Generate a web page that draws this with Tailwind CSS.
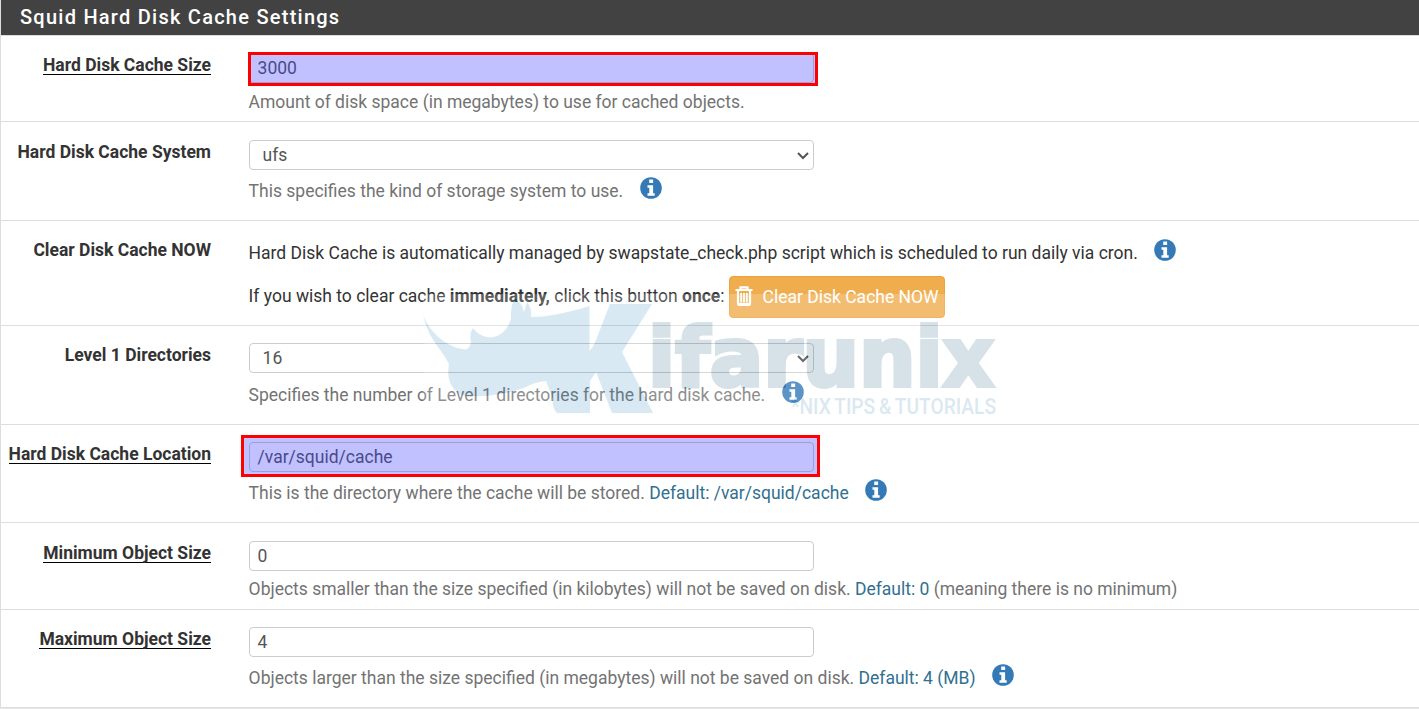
<!DOCTYPE html>
<html lang="en">
  <head>
    <meta charset="UTF-8" />
    <meta name="viewport" content="width=device-width, initial-scale=1.0" />
    <title>Squid Cache</title>
    <script src="https://cdn.jsdelivr.net/npm/@tailwindcss/browser@4"></script>
  </head>
  <body
    class="relative w-[1419px] h-[709px] overflow-hidden bg-[#e8e8e8] font-['Roboto',sans-serif] text-[17.5px] leading-[25px] text-[#333]"
  >
    <svg class="hidden">
      <symbol id="info" viewBox="0 0 22 22">
        <circle cx="11" cy="11" r="10.8" fill="#337ab7" />
        <path
          fill="#fff"
          d="M9.2 2.6h3.9v3.3H9.2zM7.5 8.2h5.6v8h1.6v2.6H7.5v-2.6h1.8v-5.4H7.5z"
        />
      </symbol>
    </svg>

    <div class="h-[708px] border-l border-b border-[#ddd] bg-white">
      <h2
        class="h-[35px] bg-[#424242] pl-[19px] text-[20px] leading-[34px] font-medium tracking-[1.25px] text-white"
      >
        Squid Hard Disk Cache Settings
      </h2>

      <div class="flex h-[87px] border-y border-[#ddd]">
        <label class="w-[210px] pt-[17px] text-right font-bold">
          <span class="inline-block h-[22px] border-b border-black">Hard Disk Cache Size</span>
        </label>
        <div class="ml-[37.6px] pt-[17px]">
          <div class="h-[30px] w-[565px] rounded border border-[#ccc] px-2 leading-[28px] text-[#555]">3000</div>
          <p class="mt-[7px] text-[#737373]">Amount of disk space (in megabytes) to use for cached objects.</p>
        </div>
      </div>

      <div class="flex h-[99px] border-b border-[#ddd]">
        <label class="w-[210px] pt-[18px] text-right font-bold">Hard Disk Cache System</label>
        <div class="ml-[37.6px] pt-[18px]">
          <div class="flex h-[30px] w-[565px] items-center justify-between rounded border border-[#ccc] pr-1 pl-[13px] text-[#555]">
            ufs
            <svg class="mt-[1px] h-3 w-3" viewBox="0 0 12 12" fill="none" stroke="#555" stroke-width="2"><path d="M1 3l5 5 5-5" /></svg>
          </div>
          <p class="mt-[9px] flex text-[#737373]">
            This specifies the kind of storage system to use.
            <svg class="-mt-[2px] ml-[16.5px] h-[22px] w-[22px]"><use href="#info" /></svg>
          </p>
        </div>
      </div>

      <div class="flex h-[105px] border-b border-[#ddd]">
        <label class="w-[210px] pt-[17px] text-right font-bold">Clear Disk Cache NOW</label>
        <div class="ml-[37.6px] pt-[20px]">
          <p class="flex">
            Hard Disk Cache is automatically managed by swapstate_check.php script which is scheduled to run daily via cron.
            <svg class="-mt-[2px] ml-[16.5px] h-[22px] w-[22px]"><use href="#info" /></svg>
          </p>
          <div class="mt-[10px] flex items-center">
            <p class="-mt-[2px]">If you wish to clear cache <b>immediately,</b> click this button <b>once</b>:</p>
            <button
              class="ml-[4.5px] flex h-[42px] w-[216px] items-center rounded border border-[#eea236] bg-[#f0ad4e] pl-[5px] text-white"
            >
              <svg class="-mt-[2px] mr-[9.5px] h-5 w-[18px]" viewBox="0 0 18 20" fill="none" stroke="#fff">
                <path stroke-width="2.2" d="M0.500 4h17M5.500 4V1.300h7V4M3 4v13.500q0 1.500 1.500 1.500h9q1.500 0 1.500-1.500V4" />
                <path stroke-width="1.800" d="M6.200 7v9.500M9 7v9.500M11.800 7v9.500M4 18h10" />
              </svg>
              Clear Disk Cache NOW
            </button>
          </div>
        </div>
      </div>

      <div class="flex h-[99px] border-b border-[#ddd]">
        <label class="w-[210px] pt-[17px] text-right font-bold">Level 1 Directories</label>
        <div class="ml-[37.6px] pt-[17px]">
          <div class="flex h-[30px] w-[565px] items-center justify-between rounded border border-[#ccc] pr-1 pl-[13px] text-[#555]">
            16
            <svg class="mt-[1px] h-3 w-3" viewBox="0 0 12 12" fill="none" stroke="#444" stroke-width="2"><path d="M1 3l5 5 5-5" /></svg>
          </div>
          <p class="mt-[10px] flex text-[#737373]">
            Specifies the number of Level 1 directories for the hard disk cache.
            <svg class="-mt-[2px] ml-[16.5px] h-[22px] w-[22px]"><use href="#info" /></svg>
          </p>
        </div>
      </div>

      <div class="flex h-[98px] border-b border-[#ddd]">
        <label class="w-[210px] pt-[17px] text-right font-bold">
          <span class="inline-block h-[22px] border-b border-black">Hard Disk Cache Location</span>
        </label>
        <div class="ml-[37.6px] pt-[17px]">
          <div class="h-[30px] w-[565px] rounded border border-[#ccc] px-2 leading-[28px] text-[#555]">/var/squid/cache</div>
          <p class="mt-[9px] flex text-[#737373]">
            <span>This is the directory where the cache will be stored. <span class="text-[#31708f]">Default: /var/squid/cache</span></span>
            <svg class="-mt-[2px] ml-[16.5px] h-[22px] w-[22px]"><use href="#info" /></svg>
          </p>
        </div>
      </div>

      <div class="flex h-[87px] border-b border-[#ddd]">
        <label class="w-[210px] pt-[18px] text-right font-bold">
          <span class="inline-block h-[22px] border-b border-black">Minimum Object Size</span>
        </label>
        <div class="ml-[37.6px] pt-[18px]">
          <div class="h-[30px] w-[565px] rounded border border-[#ccc] px-2 leading-[28px] text-[#555]">0</div>
          <p class="mt-[6px] text-[#737373]">
            Objects smaller than the size specified (in kilobytes) will not be saved on disk.
            <span class="text-[#31708f]">Default: 0</span> (meaning there is no minimum)
          </p>
        </div>
      </div>

      <div class="flex">
        <label class="w-[210px] pt-[17px] text-right font-bold">
          <span class="inline-block h-[22px] border-b border-black">Maximum Object Size</span>
        </label>
        <div class="ml-[37.6px] pt-[17px]">
          <div class="h-[30px] w-[565px] rounded border border-[#ccc] px-2 leading-[28px] text-[#555]">4</div>
          <p class="mt-[9px] flex text-[#737373]">
            <span>Objects larger than the size specified (in megabytes) will not be saved on disk. <span class="text-[#31708f]">Default: 4 (MB)</span></span>
            <svg class="-mt-[2px] ml-[16.5px] h-[22px] w-[22px]"><use href="#info" /></svg>
          </p>
        </div>
      </div>
    </div>

    <!-- highlights -->
    <div class="absolute top-[52px] left-[248px] h-[34px] w-[570px] border-3 border-[#f00] bg-[#3333ff]/30"></div>
    <div class="absolute top-[435px] left-[241px] h-[42px] w-[579px] border-3 border-[#f00] bg-[#3333ff]/30"></div>

    <!-- watermark -->
    <svg class="absolute top-[294px] left-[420px] h-[126px] w-[580px] overflow-visible opacity-20" viewBox="420 294 580 126">
      <path fill="#fff" d="M423 294h577v125H423z" />
      <path
        fill="#4396c8"
        d="M423 315C429 331 446 348 466 349.500Q470 348 471 342Q469 333 473 328C480 337 490 340 499 335Q507 331 511 319Q510 307 515 298Q522 303 524 312L527 302Q532 308 531 317C550 317 570 312 589.500 306V351Q594 346 596 340L610 304H652L622 352L653 413H612L596 372L590 381V413H557Q552 408 553 399L546 381Q535 382 526 387C505 395 480 398 462 395Q445 386 449 364Q446 358 441 351Q427 334 423 315Z"
      />
      <text x="648" y="386" textLength="346" lengthAdjust="spacingAndGlyphs" class="font-['DejaVu_Sans'] text-[82px] font-bold" fill="#3c6e91" stroke="#3c6e91" stroke-width="4">ifarunix</text>
      <text x="791" y="413.500" textLength="205" lengthAdjust="spacingAndGlyphs" class="font-['Roboto'] text-[22px] font-medium [word-spacing:-1px]" fill="#4d91bd">*NIX TIPS &amp; TUTORIALS</text>
    </svg>
  </body>
</html>
